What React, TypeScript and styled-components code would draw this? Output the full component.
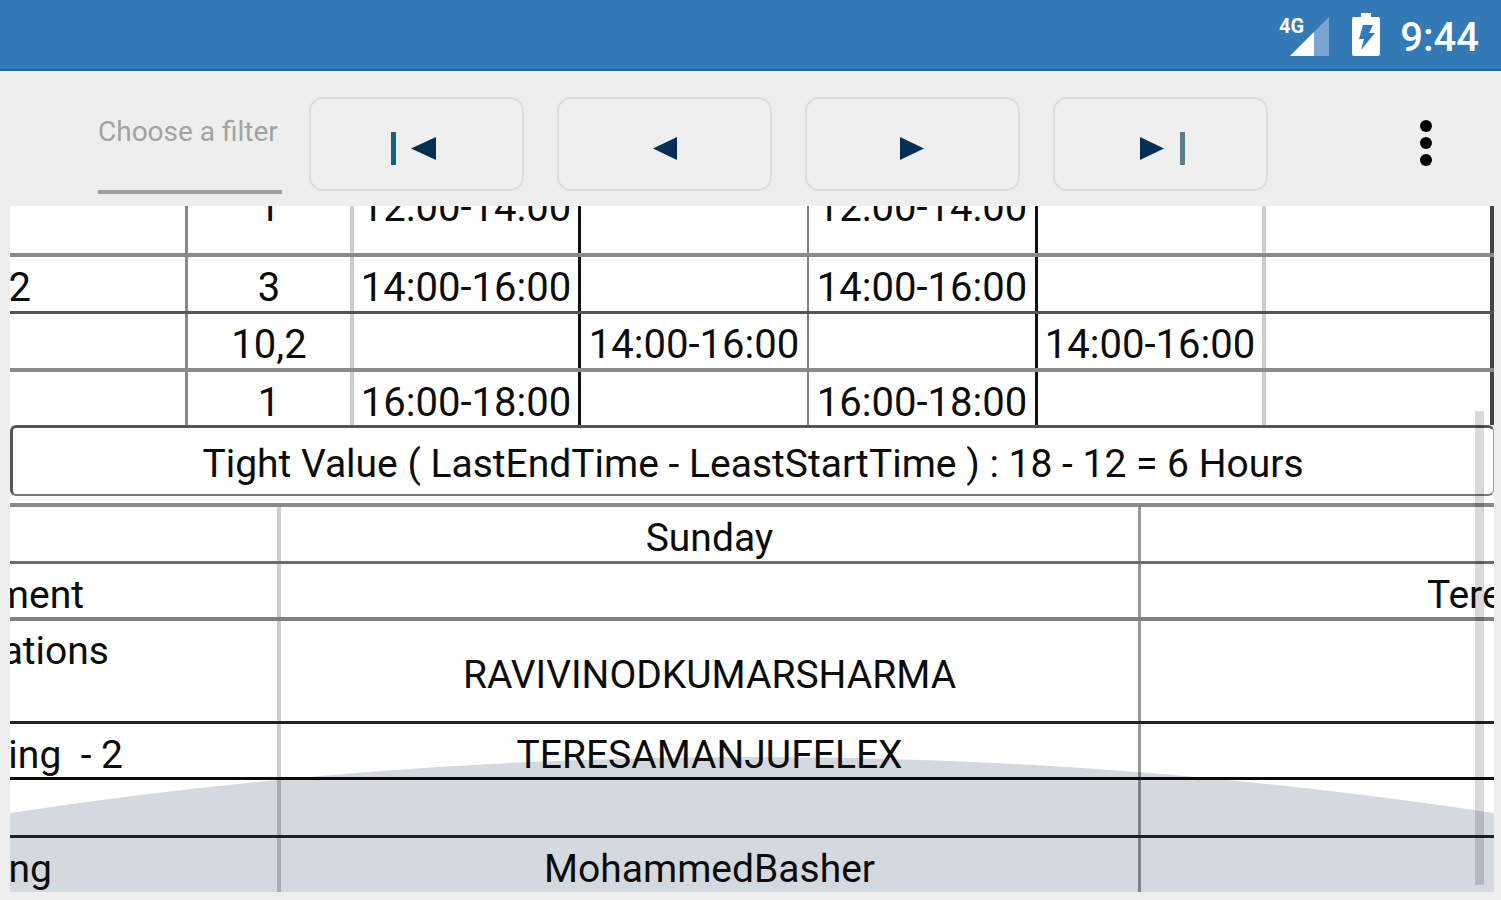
import React from "react";
import styled, { createGlobalStyle } from "styled-components";

const GlobalStyle = createGlobalStyle`
  *, *::before, *::after { box-sizing: border-box; }
  body {
    margin: 0;
    background: #eeeeee;
    color: #0c0c0c;
    font-family: Roboto, "Liberation Sans", sans-serif;
  }
`;

const Page = styled.div`
  display: flex;
  flex-direction: column;
  min-height: 100vh;
  overflow: hidden;
`;

const StatusBar = styled.header`
  display: flex;
  align-items: center;
  justify-content: flex-end;
  gap: 20px;
  height: 71px;
  padding: 0 22px;
  background: #337ab7;
  border-bottom: 2px solid #0f6cb2;
  color: #ffffff;
`;

const Clock = styled.time`
  padding-top: 6px;
  font-size: 40px;
  line-height: 46px;
  font-weight: 500;
`;

const StatusIcon = styled.svg`
  display: block;
  flex: none;
`;

const Toolbar = styled.div`
  display: flex;
  align-items: flex-start;
  height: 135px;
  padding: 26px 51px 0 98px;
`;

const Filter = styled.input`
  flex: none;
  width: 184px;
  height: 97px;
  padding: 0 0 24px;
  border: 0;
  border-bottom: 4px solid #a0a0a0;
  background: transparent;
  color: #444444;
  font-family: inherit;
  font-size: 28px;
  line-height: 32px;
  outline: none;
  &::placeholder { color: #a2a2a2; opacity: 1; }
`;

const Pager = styled.nav`
  display: flex;
  gap: 33px;
  margin-left: 27px;
`;

const PageButton = styled.button`
  display: flex;
  align-items: center;
  justify-content: center;
  width: 215px;
  height: 94px;
  padding: 10px 0 0;
  border: 2px solid #dddddd;
  border-radius: 14px;
  background: #efefef;
  cursor: pointer;
`;

const MenuButton = styled.button`
  display: flex;
  align-items: center;
  justify-content: center;
  width: 48px;
  height: 92px;
  margin-left: auto;
  padding: 0;
  border: 0;
  background: transparent;
  cursor: pointer;
`;

const Panel = styled.main`
  position: relative;
  margin: 0 7px 8px 10px;
  overflow: hidden;
  background: #ffffff;
`;

const Hill = styled.svg`
  position: absolute;
  left: 0;
  bottom: 0;
  width: 100%;
  height: 135px;
`;

const ScrollThumb = styled.div`
  position: absolute;
  right: 10px;
  bottom: 7px;
  width: 9px;
  height: 474px;
  background: rgba(0, 0, 0, 0.15);
`;

/* The sheets are scrolled a little to the right, so they start left of the panel. */
const Sheet = styled.table<{ $size: number; $scrolled?: boolean }>`
  position: relative;
  width: calc(100% + 40px);
  margin-left: -40px;
  margin-top: ${(p) => (p.$scrolled ? "-51px" : "0")};
  border-top: ${(p) => (p.$scrolled ? "0" : "4px solid #8a8a8a")};
  border-collapse: separate;
  border-spacing: 0;
  table-layout: fixed;
  font-size: ${(p) => p.$size}px;
  line-height: 44px;
`;

const Column = styled.col<{ $width: number }>`
  width: ${(p) => p.$width}px;
`;

const Row = styled.tr<{ $height: number }>`
  height: ${(p) => p.$height}px;
`;

type Line = [number, string];

/* The right-hand rule is an inset shadow, so that it meets the row rule squarely. */
const Cell = styled.td<{
  $right: Line;
  $bottom: Line;
  $align?: "left" | "center" | "right";
  $inset?: number;
  $top?: boolean;
}>`
  padding: 8px ${(p) => p.$right[0] + (p.$align === "right" ? p.$inset ?? 0 : 0)}px 0
    ${(p) => (p.$align === "left" ? p.$inset : 0)}px;
  box-shadow: ${(p) => `inset -${p.$right[0]}px 0 ${p.$right[1]}`};
  border-bottom: ${(p) => `${p.$bottom[0]}px solid ${p.$bottom[1]}`};
  text-align: ${(p) => p.$align ?? "center"};
  vertical-align: ${(p) => (p.$top ? "top" : "middle")};
  white-space: pre;
`;

const Summary = styled.p`
  position: relative;
  display: flex;
  align-items: center;
  justify-content: center;
  height: 71px;
  margin: 0 0 7px;
  padding-top: 6px;
  border: 3px solid #555555;
  border-right: 1px solid #999999;
  border-bottom: 2px solid #777777;
  border-radius: 6px;
  font-size: 39px;
  line-height: 44px;
  white-space: nowrap;
`;

const NONE: Line = [0, "transparent"];
const FAINT: Line = [4, "rgba(0, 0, 0, 0.2)"];
const MEDIUM: Line = [3, "rgba(0, 0, 0, 0.4)"];

const timeColumns: { width: number; line: Line }[] = [
  { width: 218, line: [3, "#888888"] },
  { width: 166, line: FAINT },
  { width: 227, line: [3, "#111111"] },
  { width: 228, line: [2, "#808080"] },
  { width: 229, line: [3, "#111111"] },
  { width: 228, line: FAINT },
  { width: 228, line: [4, "#444444"] },
];

const timeRows: { height: number; line: Line; cells: string[] }[] = [
  { height: 102, line: [4, "#8a8a8a"], cells: ["", "1", "12:00-14:00", "", "12:00-14:00", "", ""] },
  { height: 57, line: [3, "#555555"], cells: ["2", "3", "14:00-16:00", "", "14:00-16:00", "", ""] },
  { height: 58, line: [4, "#8a8a8a"], cells: ["", "10,2", "", "14:00-16:00", "", "14:00-16:00", ""] },
  { height: 53, line: NONE, cells: ["", "1", "16:00-18:00", "", "16:00-18:00", "", ""] },
];

interface DayRow {
  height: number;
  line: Line;
  subject: string;
  inset: number;
  top?: boolean;
  teacher: string;
  next: string;
}

const dayRows: DayRow[] = [
  { height: 57, line: [3, "#6c6c6c"], subject: "", inset: 0, teacher: "Sunday", next: "" },
  { height: 57, line: [4, "#808080"], subject: "ment", inset: 193, teacher: "", next: "Tere" },
  { height: 103, line: [3, "#222222"], subject: "ations", inset: 168, top: true, teacher: "RAVIVINODKUMARSHARMA", next: "" },
  { height: 56, line: [3, "#0a0a0a"], subject: "ing  - 2", inset: 154, teacher: "TERESAMANJUFELEX", next: "" },
  { height: 58, line: [3, "#1c2227"], subject: "", inset: 0, teacher: "", next: "" },
  { height: 54, line: NONE, subject: "ng", inset: 225, teacher: "MohammedBasher", next: "" },
];

const NAVY = "#042f55";

const pagerButtons = [
  { label: "First", triangle: "M45 5V28L20 16.500Z", bar: 0, barColor: "#17607f" },
  { label: "Previous", triangle: "M38 5V28L14 16.500Z" },
  { label: "Next", triangle: "M13 5V28L37 16.500Z" },
  { label: "Last", triangle: "M5 5V28L29 16.500Z", bar: 45, barColor: "#587c8a" },
];

export default function App() {
  return (
    <Page>
      <GlobalStyle />
      <StatusBar>
        <StatusIcon width="52" height="46" viewBox="0 0 52 46" role="img" aria-label="4G signal">
          <path d="M51 5V44H12Z" fill="#7ba6d2" />
          <path d="M36 20V44H12Z" fill="#ffffff" />
          <text x="1" y="21" fontSize="20" fontWeight="700" fill="#ffffff">4G</text>
        </StatusIcon>
        <StatusIcon width="30" height="46" viewBox="0 0 30 46" role="img" aria-label="Battery charging">
          <path d="M11 1H21V5H28Q30 5 30 7V42Q30 44 28 44H4Q2 44 2 42V7Q2 5 4 5H11Z" fill="#ffffff" />
          <path d="M13 13H23L19 21H25L11 38L14 27H9Z" fill="#337ab7" />
        </StatusIcon>
        <Clock>9:44</Clock>
      </StatusBar>

      <Toolbar>
        <Filter type="text" aria-label="Filter" placeholder="Choose a filter" />
        <Pager aria-label="Timetable pages">
          {pagerButtons.map((b) => (
            <PageButton key={b.label} type="button" aria-label={b.label}>
              <svg width="52" height="34" viewBox="0 0 52 34" aria-hidden="true">
                {b.bar !== undefined && <rect x={b.bar} y="0" width="5" height="33" fill={b.barColor} />}
                <path d={b.triangle} fill={NAVY} />
              </svg>
            </PageButton>
          ))}
        </Pager>
        <MenuButton type="button" aria-label="More options">
          <svg width="14" height="48" viewBox="0 0 14 48" aria-hidden="true">
            <circle cx="7" cy="7" r="6" />
            <circle cx="7" cy="24" r="6" />
            <circle cx="7" cy="41" r="6" />
          </svg>
        </MenuButton>
      </Toolbar>

      <Panel>
        <Hill viewBox="0 0 1484 135" preserveAspectRatio="none" aria-hidden="true">
          <path d="M0 56Q742 -56 1484 56V135H0Z" fill="#d4d9e0" />
        </Hill>

        <Sheet $size={40} $scrolled>
          <colgroup>
            {timeColumns.map((c, i) => (
              <Column key={i} $width={c.width} />
            ))}
          </colgroup>
          <tbody>
            {timeRows.map((row, r) => (
              <Row key={r} $height={row.height}>
                {row.cells.map((text, c) => (
                  <Cell
                    key={c}
                    $right={timeColumns[c].line}
                    $bottom={row.line}
                    $align={c === 0 ? "right" : "center"}
                    $inset={154}
                  >
                    {text}
                  </Cell>
                ))}
              </Row>
            ))}
          </tbody>
        </Sheet>

        <Summary>Tight Value ( LastEndTime - LeastStartTime ) : 18 - 12 = 6 Hours</Summary>

        <Sheet $size={39}>
          <colgroup>
            <Column $width={311} />
            <Column $width={860} />
            <Column $width={353} />
          </colgroup>
          <tbody>
            {dayRows.map((row, r) => (
              <Row key={r} $height={row.height}>
                <Cell
                  $right={FAINT}
                  $bottom={row.line}
                  $align="right"
                  $inset={row.inset}
                  $top={row.top}
                >
                  {row.subject}
                </Cell>
                <Cell $right={MEDIUM} $bottom={row.line}>
                  {row.teacher}
                </Cell>
                <Cell $right={NONE} $bottom={row.line} $align="left" $inset={286}>
                  {row.next}
                </Cell>
              </Row>
            ))}
          </tbody>
        </Sheet>
        <ScrollThumb />
      </Panel>
    </Page>
  );
}
